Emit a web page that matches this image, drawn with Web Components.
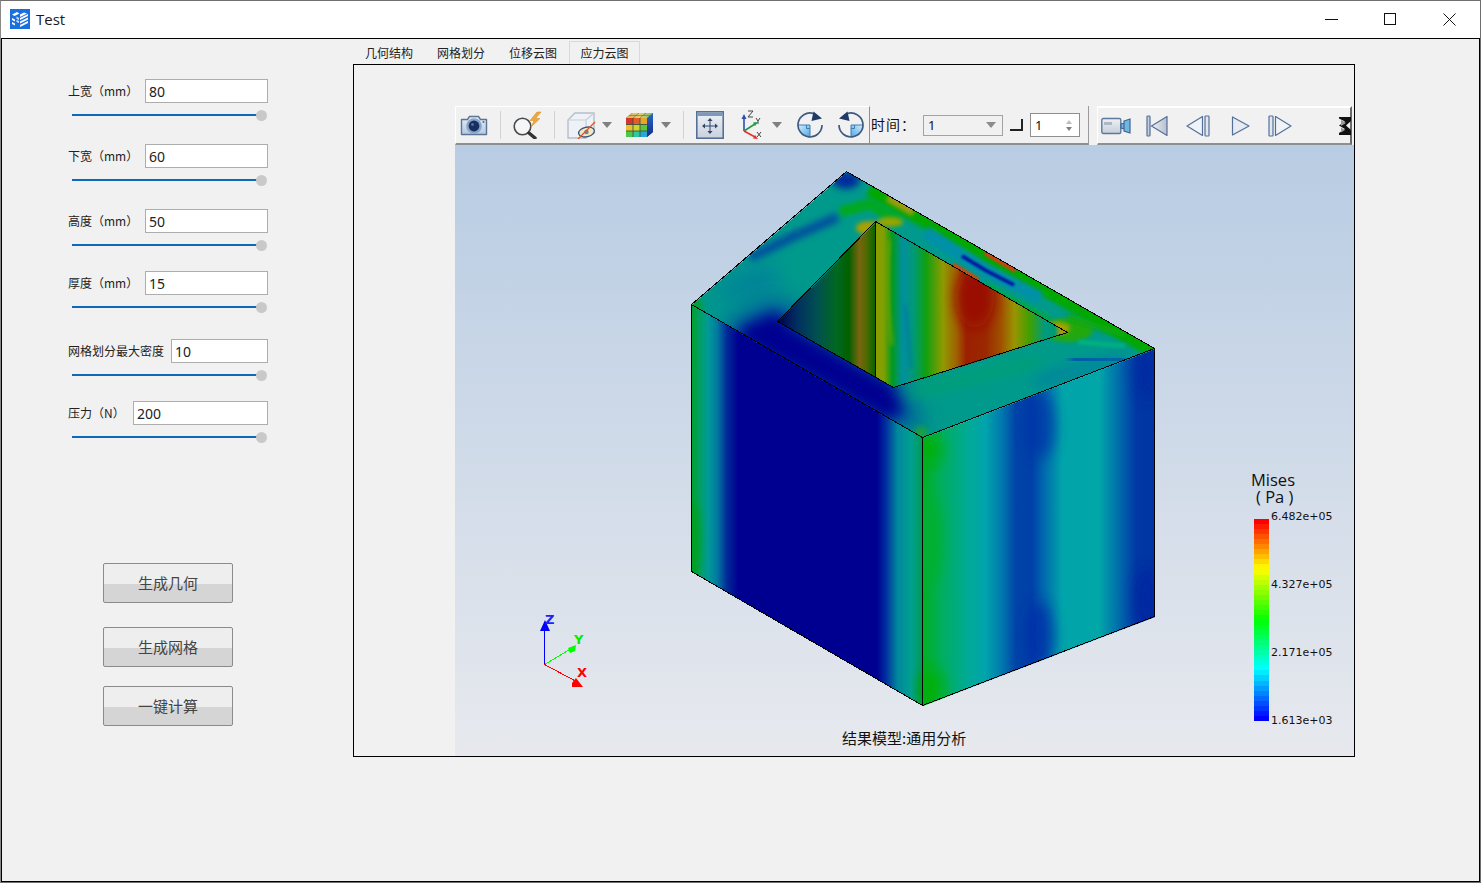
<!DOCTYPE html>
<html lang="zh">
<head>
<meta charset="utf-8">
<title>Test</title>
<style>
	html, body { margin: 0; padding: 0; background: #f1f1f1; overflow: hidden; }
</style>
</head>
<body>
<app-window title-text="Test">
	<side-panel slot="side">
		<param-field label="上宽（mm）" value="80" style="--label-w:77px"></param-field>
		<param-field label="下宽（mm）" value="60" style="--label-w:77px;margin-top:23px"></param-field>
		<param-field label="高度（mm）" value="50" style="--label-w:77px;margin-top:23px"></param-field>
		<param-field label="厚度（mm）" value="15" style="--label-w:77px;margin-top:20px"></param-field>
		<param-field label="网格划分最大密度" value="10" style="--label-w:103px;margin-top:26px"></param-field>
		<param-field label="压力（N）" value="200" style="--label-w:65px;margin-top:20px"></param-field>
		<action-button style="margin-top:120px">生成几何</action-button>
		<action-button style="margin-top:24px">生成网格</action-button>
		<action-button style="margin-top:19px">一键计算</action-button>
	</side-panel>
	<tab-view slot="main">
		<tab-item slot="tabs">几何结构</tab-item>
		<tab-item slot="tabs">网格划分</tab-item>
		<tab-item slot="tabs">位移云图</tab-item>
		<tab-item slot="tabs" active>应力云图</tab-item>
		<fem-toolbar></fem-toolbar>
		<fem-viewport>
			<color-legend></color-legend>
			<span slot="caption">结果模型:通用分析</span>
		</fem-viewport>
	</tab-view>
</app-window>

<script>
const CJK = '"Noto Sans CJK SC", "Noto Sans", sans-serif';

// Outer window: title bar, then side panel and tab area
class AppWindow extends HTMLElement {
	constructor () {
		super();
		this.attachShadow( { mode: 'open' } );
		this.shadowRoot.innerHTML = `
			<style>
				:host { display: flex; flex-direction: column; width: 1481px; height: 883px; box-sizing: border-box; border: 1px solid #6f6f6f; border-left-color: #8a8a8a; background: #fff; }
				header { flex: none; height: 37px; display: flex; align-items: center; background: #fff; padding-right: 1px; }
				.logo { width: 20px; height: 20px; margin: -1px 6px 0 9px; }
				.name { font: 15px "Open Sans", sans-serif; color: #1a1a1a; flex: 1; margin-top: -2px; }
				.ctl { width: 59px; height: 37px; display: flex; align-items: center; justify-content: center; margin-top: -1px; }
				.body { flex: 1; display: flex; min-height: 0; border: 1px solid #000; background: #f1f1f1; }
			</style>
			<header>
				<svg class="logo" viewBox="0 0 20 20">
					<rect width="20" height="20" fill="#1a6fe0"/>
					<path d="M2 5.5 7 3 9.5 4.5 4.5 7zM2 9l3 1.5v2L2 11zM2 13l3 1.5v2L2 15z" fill="#fff"/>
					<path d="M6.5 11l2.5 1v2l-2.500-1zM6.5 7.5 9 9v2L6.5 9.7z" fill="#cfe2fb"/>
					<path d="M10 9 18 5v2l-8 4zM10 12.5l8-4v2l-8 4zM10 16l8-4v2l-8 4zM10 5.5 14 3.5l3 1-7 3.5z" fill="#fff"/>
				</svg>
				<span class="name">${ this.getAttribute( 'title-text' ) }</span>
				<span class="ctl"><svg width="13" height="13"><path d="M0 6.5h13" stroke="#111" fill="none"/></svg></span>
				<span class="ctl"><svg width="13" height="13"><rect x=".5" y=".5" width="11" height="11" stroke="#111" fill="none"/></svg></span>
				<span class="ctl"><svg width="13" height="13"><path d="M.5.5l12 12M12.5.5l-12 12" stroke="#111" fill="none"/></svg></span>
			</header>
			<div class="body"><slot name="side"></slot><slot name="main"></slot></div>
		`;
	}
}
customElements.define( 'app-window', AppWindow );

class SidePanel extends HTMLElement {
	constructor () {
		super();
		this.attachShadow( { mode: 'open' } );
		this.shadowRoot.innerHTML = `
			<style>
				:host { display: flex; flex-direction: column; flex: none; width: 351px; box-sizing: border-box; padding: 40px 0 0 66px; }
			</style>
			<slot></slot>
		`;
	}
}
customElements.define( 'side-panel', SidePanel );

// Label + line edit + slider
class ParamField extends HTMLElement {
	constructor () {
		super();
		this.attachShadow( { mode: 'open' } );
		this.shadowRoot.innerHTML = `
			<style>
				:host { display: block; width: 200px; }
				.row { display: flex; align-items: center; height: 24px; }
				label { flex: none; width: var(--label-w, 77px); font: 12px/26px ${ CJK }; color: #222; white-space: nowrap; }
				.edit { flex: 1; height: 24px; box-sizing: border-box; border: 1px solid #adadad; background: #fff; padding-left: 3px; font: 14px/24px "Noto Sans", sans-serif; color: #222; }
				.slider { position: relative; height: 11px; margin: 7px 0 0 4px; }
				.track { position: absolute; left: 0; right: 8px; top: 4px; height: 2px; background: #0f68b8; }
				.thumb { position: absolute; right: 1px; top: 0; width: 11px; height: 11px; border-radius: 50%; background: #c9c9c9; }
			</style>
			<div class="row">
				<label>${ this.getAttribute( 'label' ) }</label>
				<div class="edit">${ this.getAttribute( 'value' ) }</div>
			</div>
			<div class="slider"><div class="track"></div><div class="thumb"></div></div>
		`;
	}
}
customElements.define( 'param-field', ParamField );

class ActionButton extends HTMLElement {
	constructor () {
		super();
		this.attachShadow( { mode: 'open' } );
		this.shadowRoot.innerHTML = `
			<style>
				:host { display: flex; align-items: center; justify-content: center; width: 130px; height: 40px; box-sizing: border-box; padding-bottom: 2px; margin-left: 35px; border: 1px solid #8b8b8b; border-radius: 2px; background: linear-gradient(#eeeeee 52%, #d5d5d5 52%); font: 15px ${ CJK }; color: #444; }
			</style>
			<slot></slot>
		`;
	}
}
customElements.define( 'action-button', ActionButton );

class TabView extends HTMLElement {
	constructor () {
		super();
		this.attachShadow( { mode: 'open' } );
		this.shadowRoot.innerHTML = `
			<style>
				:host { display: flex; flex-direction: column; flex: none; width: 1002px; height: 716px; margin-top: 2px; }
				.bar { flex: none; display: flex; height: 23px; }
				.pane { flex: 1; min-height: 0; display: flex; flex-direction: column; box-sizing: border-box; border: 1px solid #000; padding: 41px 0 0 101px; background: #f1f1f1; }
			</style>
			<div class="bar"><slot name="tabs"></slot></div>
			<div class="pane"><slot></slot></div>
		`;
	}
}
customElements.define( 'tab-view', TabView );

class TabItem extends HTMLElement {
	constructor () {
		super();
		this.attachShadow( { mode: 'open' } );
		this.shadowRoot.innerHTML = `
			<style>
				:host { display: block; box-sizing: border-box; width: 72px; height: 23px; text-align: center; font: 12px/22px ${ CJK }; color: #222; border: 1px solid transparent; border-bottom: 0; }
				:host([active]) { border-color: #d9d9d9; background: #f1f1f1; width: 71px; }
			</style>
			<slot></slot>
		`;
	}
}
customElements.define( 'tab-item', TabItem );

// Toolbar icons, keyed by name. Each is drawn in its own pixel box.
const ROTATE = `
	<defs><linearGradient id="q" x1="0" y1="0" x2="1" y2="1"><stop offset="0" stop-color="#d6ecfa"/><stop offset="1" stop-color="#4fa8e4"/></linearGradient></defs>
	<path d="M1 14H13V26A12 12 0 0 1 1 14z" fill="url(#q)"/>
	<path d="M1 14H13V26M9.5 14v3.5H13" fill="none" stroke="#3a7fb8" stroke-width="1"/>
	<path d="M16.5 2.5A12 12 0 1 0 25 14" fill="none" stroke="#3f5a80" stroke-width="1.7"/>
	<path d="M16.5 .5 25 7.5 14.5 10z" fill="#1f3a66"/>`;

const ICONS = {
	camera: `<svg width="28" height="24" viewBox="0 0 28 24">
		<defs><linearGradient id="cam" x1="0" y1="0" x2="0" y2="1"><stop offset="0" stop-color="#e4edf7"/><stop offset="1" stop-color="#b4cae3"/></linearGradient></defs>
		<path d="M1.5 6.5h6l2-3h9l2 3h6v15h-25z" fill="url(#cam)" stroke="#5a7598" stroke-width="1.4" stroke-linejoin="round"/>
		<circle cx="14" cy="13" r="7.8" fill="#8ba4c8"/><circle cx="14" cy="13" r="5.4" fill="#17305f"/><circle cx="12.5" cy="11.5" r="1.3" fill="#5d7fb0"/>
		<circle cx="23.5" cy="9" r="1" fill="#4e6a8f"/></svg>`,
	zoom: `<svg width="30" height="28" viewBox="0 0 30 28">
		<circle cx="9.5" cy="15.5" r="8.3" fill="#f4f6f8" stroke="#4a4a4a" stroke-width="1.6"/>
		<path d="M16 22 22 27" stroke="#333" stroke-width="3.4" stroke-linecap="round"/>
		<path d="M24 1l-7 8.5h4.2L18 16l9-8.5h-4.4L28 1z" fill="#f0a63a" stroke="#cf8a20" stroke-width=".5"/></svg>`,
	cube: `<svg width="30" height="28" viewBox="0 0 30 28">
		<path d="M1 9 8 2h19v17l-8 8H1z" fill="#eef1f5" stroke="#b4bfcc" stroke-width="1.4"/>
		<path d="M1 9h18v18M19 9l8-7" fill="none" stroke="#c6cfda" stroke-width="1.2"/>
		<ellipse cx="19.5" cy="21" rx="8" ry="4.8" fill="#f4e6bd" stroke="#33527e" stroke-width="1.3" transform="rotate(-12 19.5 21)"/>
		<circle cx="19.5" cy="21" r="2.2" fill="#6b84a8"/>
		<path d="M11 28 28 11" stroke="#d8552a" stroke-width="1.3"/></svg>`,
	rubik: `<svg width="28" height="26" viewBox="0 0 28 26">
		<defs><linearGradient id="rt" x1="0" y1="0" x2="1" y2="0"><stop offset="0" stop-color="#d8b050"/><stop offset=".5" stop-color="#e8d070"/><stop offset="1" stop-color="#70c070"/></linearGradient>
		<linearGradient id="rs" x1="0" y1="0" x2="0" y2="1"><stop offset="0" stop-color="#2a68c8"/><stop offset="1" stop-color="#142c88"/></linearGradient></defs>
		<path d="M0 6 6 1h21v19l-6 5H0z" fill="#2147a8"/>
		<path d="M21 6 27 1v19l-6 5z" fill="url(#rs)"/>
		<path d="M0 6 6 1h21l-6 5z" fill="url(#rt)"/>
		<path d="M7 6 13 1M14 6l6-5M3 3.5h21" stroke="#6a7a40" stroke-width=".7" fill="none"/>
		<rect x="0" y="6" width="7" height="6.5" fill="#d8342a"/><rect x="7" y="6" width="7" height="6.5" fill="#e0602c"/><rect x="14" y="6" width="7" height="6.5" fill="#e8a52c"/>
		<rect x="0" y="12.5" width="7" height="6.5" fill="#e8c030"/><rect x="7" y="12.5" width="7" height="6.5" fill="#c8d830"/><rect x="14" y="12.5" width="7" height="6.5" fill="#5ac83a"/>
		<rect x="0" y="19" width="7" height="6" fill="#4ac84a"/><rect x="7" y="19" width="7" height="6" fill="#30c8a0"/><rect x="14" y="19" width="7" height="6" fill="#28a8d8"/>
		<path d="M7 6v19M14 6v19M0 12.5h21M0 19h21" stroke="#3a4a3a" stroke-width=".8"/></svg>`,
	fit: `<svg width="28" height="28" viewBox="0 0 28 28">
		<defs><linearGradient id="fitbg" x1="0" y1="0" x2="0" y2="1"><stop offset="0" stop-color="#eef1f6"/><stop offset="1" stop-color="#c9d1de"/></linearGradient></defs>
		<rect x=".8" y=".8" width="26.4" height="26.4" fill="url(#fitbg)" stroke="#4e6a8f" stroke-width="1.5"/>
		<rect x="1.5" y="1.5" width="25" height="3.5" fill="#7f97b8"/>
		<path d="M14 8v14M7 15h14" stroke="#2f4668" stroke-width="1"/>
		<path d="M14 7l-2.6 3h5.2zM14 23l-2.6-3h5.2zM6 15l3-2.6v5.2zM22 15l-3-2.6v5.2z" fill="#2f4668"/></svg>`,
	triad: `<svg width="26" height="30" viewBox="0 0 26 30">
		<path d="M4 21V7" stroke="#2c4fb0" stroke-width="1.6"/><path d="M4 4 1.5 9h5z" fill="#2c4fb0"/>
		<path d="M4 21 15 14" stroke="#1e9a45" stroke-width="1.6"/><path d="M18 12l-5 .5 2 3.5z" fill="#1e9a45"/>
		<path d="M4 21l11 6" stroke="#e53030" stroke-width="1.6"/><path d="M18 29l-5-.5 2-3.5z" fill="#e53030"/>
		<path d="M8 1h5l-5 6h5M16 8l2 3 2-3M18 11v3M17 22l4 5M21 22l-4 5" stroke="#444" stroke-width="1" fill="none"/></svg>`,
	rotcw: `<svg width="27" height="28" viewBox="0 0 27 28">${ ROTATE }</svg>`,
	rotccw: `<svg width="27" height="28" viewBox="0 0 27 28"><g transform="translate(26 0) scale(-1 1)">${ ROTATE }</g></svg>`,
	video: `<svg width="30" height="18" viewBox="0 0 30 18">
		<defs><linearGradient id="vid" x1="0" y1="0" x2="0" y2="1"><stop offset="0" stop-color="#eef1f5"/><stop offset="1" stop-color="#c6ced9"/></linearGradient></defs>
		<rect x=".8" y="1.5" width="19" height="15" rx="1.5" fill="url(#vid)" stroke="#5d7a9e" stroke-width="1.4"/>
		<rect x="3" y="5" width="8" height="3" fill="#aeb8c5"/>
		<path d="M20 7l3-1v6l-3-1zM23 4l6-2v14l-6-2z" fill="#6fb7e3" stroke="#44658f" stroke-width="1.2"/></svg>`,
	first: `<svg width="22" height="22" viewBox="0 0 22 22">
		<defs><linearGradient id="pl" x1="0" y1="0" x2="1" y2="0"><stop offset="0" stop-color="#eef1f6"/><stop offset="1" stop-color="#b6c0ce"/></linearGradient></defs>
		<rect x="1" y="1" width="3" height="20" rx=".8" fill="#c6d0dd" stroke="#54709a" stroke-width="1.2"/>
		<path d="M21 1.5v19L5.5 11z" fill="url(#pl)" stroke="#54709a" stroke-width="1.2" stroke-linejoin="round"/></svg>`,
	prev: `<svg width="24" height="22" viewBox="0 0 24 22">
		<path d="M16.5 1.5v19L1 11z" fill="#f0f3f7" stroke="#54709a" stroke-width="1.2" stroke-linejoin="round"/>
		<rect x="19" y="1" width="4" height="20" rx=".8" fill="#e2e7ee" stroke="#54709a" stroke-width="1.2"/></svg>`,
	play: `<svg width="19" height="22" viewBox="0 0 19 22">
		<path d="M1.5 2v18L18 11z" fill="#e6ebf2" stroke="#54709a" stroke-width="1.2" stroke-linejoin="round"/></svg>`,
	next: `<svg width="24" height="22" viewBox="0 0 24 22">
		<rect x="1" y="1" width="4" height="20" rx=".8" fill="#e2e7ee" stroke="#54709a" stroke-width="1.2"/>
		<path d="M7.5 1.5v19L23 11z" fill="#f0f3f7" stroke="#54709a" stroke-width="1.2" stroke-linejoin="round"/></svg>`,
	more: `<svg width="12" height="18" viewBox="0 0 12 18">
		<path d="M0 0h12v4l-5 4.5L12 13v5H0v-2l6-4-6-3.5 6-4-6-3z" fill="#111"/>
		<path d="M2 3l5 3-5 3zM2 10.5l4 2.5-4 2.500z" fill="#9a9a9a"/></svg>`
};

class ToolIcon extends HTMLElement {
	constructor () {
		super();
		this.attachShadow( { mode: 'open' } );
		this.shadowRoot.innerHTML = `
			<style>
				:host { display: flex; flex: none; align-items: center; justify-content: center; }
				svg { display: block; }
			</style>
			${ ICONS[ this.getAttribute( 'name' ) ] || '' }
		`;
	}
}
customElements.define( 'tool-icon', ToolIcon );

class FemToolbar extends HTMLElement {
	constructor () {
		super();
		this.attachShadow( { mode: 'open' } );
		this.shadowRoot.innerHTML = `
			<style>
				:host { display: flex; flex: none; height: 39px; width: 897px; box-sizing: border-box; background: #f1f1f1; }
				.grp { display: flex; align-items: center; box-sizing: border-box; height: 39px; border-bottom: 2px solid #8f8f8f; }
				.g1 { width: 415px; border-top: 1px solid #fff; border-left: 1px solid #fff; border-right: 1px solid #8f8f8f; padding-left: 4px; }
				.g2 { width: 219px; border-right: 1px solid #9a9a9a; padding-top: 1px; }
				.g3 { flex: none; width: 255px; margin-left: 8px; border-top: 2px solid #fff; border-left: 1px solid #fff; border-right: 2px solid #6a6a6a; padding-left: 3px; }
				.sep { flex: none; width: 1px; height: 28px; background: #d2d2d2; }
				.caret { flex: none; width: 0; height: 0; border: 5px solid transparent; border-top: 6px solid #808080; border-bottom: 0; }
				.when { font: 14px ${ CJK }; color: #111; margin: -2px 0 0 1px; width: 52px; letter-spacing: 1px; white-space: nowrap; }
				.combo { width: 80px; height: 21px; box-sizing: border-box; border: 1px solid #a3a3a3; display: flex; align-items: center; justify-content: space-between; padding: 0 6px 0 4px; font: 13px "Noto Sans", sans-serif; color: #111; }
				.corner { flex: none; width: 13px; height: 12px; margin: 0 7px; border-right: 2px solid #222; border-bottom: 2px solid #222; box-sizing: border-box; }
				.spin { width: 50px; height: 24px; box-sizing: border-box; border: 1px solid #8f8f8f; background: #fff; display: flex; align-items: center; justify-content: space-between; padding: 0 7px 0 4px; font: 13px "Noto Sans", sans-serif; color: #111; }
				.arrows { display: flex; flex-direction: column; gap: 3px; }
				.arrows i { display: block; width: 0; height: 0; border: 3px solid transparent; }
				.arrows i:first-child { border-bottom: 4px solid #bdbdbd; border-top: 0; }
				.arrows i:last-child { border-top: 4px solid #808080; border-bottom: 0; }
				.combo .caret { border-top-color: #8c8c8c; }
			</style>
			<div class="grp g1">
				<tool-icon name="camera" style="width:28px"></tool-icon>
				<span class="sep" style="margin-left:12px"></span>
				<tool-icon name="zoom" style="width:30px;margin-left:12px"></tool-icon>
				<span class="sep" style="margin-left:11px"></span>
				<tool-icon name="cube" style="width:30px;margin-left:12px"></tool-icon>
				<span class="caret" style="margin-left:5px"></span>
				<tool-icon name="rubik" style="width:28px;margin-left:14px"></tool-icon>
				<span class="caret" style="margin-left:7px"></span>
				<span class="sep" style="margin-left:12px"></span>
				<tool-icon name="fit" style="width:28px;margin-left:12px"></tool-icon>
				<tool-icon name="triad" style="width:26px;margin-left:16px"></tool-icon>
				<span class="caret" style="margin-left:6px"></span>
				<tool-icon name="rotcw" style="width:27px;margin-left:15px"></tool-icon>
				<tool-icon name="rotccw" style="width:27px;margin-left:14px"></tool-icon>
			</div>
			<div class="grp g2">
				<span class="when">时间：</span>
				<div class="combo"><span>1</span><span class="caret"></span></div>
				<span class="corner"></span>
				<div class="spin"><span>1</span><span class="arrows"><i></i><i></i></span></div>
			</div>
			<div class="grp g3">
				<tool-icon name="video" style="width:30px"></tool-icon>
				<tool-icon name="first" style="width:22px;margin-left:15px"></tool-icon>
				<tool-icon name="prev" style="width:24px;margin-left:18px"></tool-icon>
				<tool-icon name="play" style="width:19px;margin-left:21px"></tool-icon>
				<tool-icon name="next" style="width:24px;margin-left:18px"></tool-icon>
				<tool-icon name="more" style="width:12px;margin-left:47px"></tool-icon>
			</div>
		`;
	}
}
customElements.define( 'fem-toolbar', FemToolbar );

// Stepped colour bar and its values
class ColorLegend extends HTMLElement {
	constructor () {
		super();
		this.attachShadow( { mode: 'open' } );

		// Contour colours, red at the top. 40 bands like the solver's legend.
		const stops = [ [ 0, [ 255, 0, 0 ] ], [ .24, [ 255, 255, 0 ] ], [ .5, [ 0, 255, 0 ] ], [ .75, [ 0, 255, 255 ] ], [ 1, [ 0, 0, 255 ] ] ];
		let bands = '';
		for ( let i = 0; i < 40; i++ ) {
			const t = i / 39;
			let k = 0;
			while ( k < stops.length - 2 && t > stops[ k + 1 ][ 0 ] ) { k++; }
			const f = ( t - stops[ k ][ 0 ] ) / ( stops[ k + 1 ][ 0 ] - stops[ k ][ 0 ] );
			const c = stops[ k ][ 1 ].map( ( v, j ) => Math.round( v + ( stops[ k + 1 ][ 1 ][ j ] - v ) * f ) );
			bands += `<i style="background:rgb(${ c.join( ',' ) })"></i>`;
		}

		this.shadowRoot.innerHTML = `
			<style>
				:host { position: absolute; left: 796px; top: 326px; width: 90px; height: 260px; display: block; color: #111; }
				.name { font: 16.5px/17px "Open Sans", sans-serif; height: 17px; }
				.unit { font: 16.5px/17px "Open Sans", sans-serif; height: 20px; padding-left: 5px; white-space: pre; }
				.scale { display: flex; }
				.bar { width: 15px; height: 202px; margin: 11px 0 0 3px; display: flex; flex-direction: column; }
				.bar i { flex: 1; display: block; }
				.vals { display: flex; flex-direction: column; justify-content: space-between; height: 218px; margin: 2px 0 0 2px; font: 11px/14px "DejaVu Sans", sans-serif; }
			</style>
			<div class="name">Mises</div>
			<div class="unit">( Pa )</div>
			<div class="scale">
				<div class="bar">${ bands }</div>
				<div class="vals"><span>6.482e+05</span><span>4.327e+05</span><span>2.171e+05</span><span>1.613e+03</span></div>
			</div>
		`;
	}
}
customElements.define( 'color-legend', ColorLegend );

// The contour plot. The svg viewBox uses window pixels, so the model is free-canvas content.
class FemViewport extends HTMLElement {
	constructor () {
		super();
		this.attachShadow( { mode: 'open' } );
		this.shadowRoot.innerHTML = `
			<style>
				:host { position: relative; display: block; flex: 1; width: 899px; min-height: 0; background: linear-gradient(#b8cce3, #e7e9ee); overflow: hidden; }
				svg { position: absolute; left: 0; top: 0; }
				.caption { position: absolute; left: 387px; top: 583px; font: 15px/20px ${ CJK }; color: #111; white-space: nowrap; }
			</style>
			<svg width="899" height="611" viewBox="455 145 899 611">
				<defs>
					<linearGradient id="leftFace" gradientUnits="userSpaceOnUse" x1="692" y1="0" x2="923" y2="0">
						<stop offset="0" stop-color="#00a030"/><stop offset=".03" stop-color="#00a060"/><stop offset=".07" stop-color="#009a98"/><stop offset=".11" stop-color="#0078a0"/><stop offset=".15" stop-color="#002c98"/><stop offset=".2" stop-color="#000090"/><stop offset=".8" stop-color="#000090"/><stop offset=".84" stop-color="#0030a0"/><stop offset=".89" stop-color="#00889c"/><stop offset=".95" stop-color="#00a090"/><stop offset="1" stop-color="#009a50"/>
					</linearGradient>
					<linearGradient id="rightFace" gradientUnits="userSpaceOnUse" x1="923" y1="0" x2="1155" y2="0">
						<stop offset="0" stop-color="#00b020"/><stop offset=".08" stop-color="#00ae60"/><stop offset=".2" stop-color="#00aa98"/><stop offset=".27" stop-color="#00a4ac"/><stop offset=".34" stop-color="#0078ae"/><stop offset=".4" stop-color="#0044a8"/><stop offset=".47" stop-color="#0040a8"/><stop offset=".53" stop-color="#0070ae"/><stop offset=".6" stop-color="#00a4aa"/><stop offset=".76" stop-color="#00a6a8"/><stop offset=".85" stop-color="#0068ac"/><stop offset=".92" stop-color="#0038a4"/><stop offset="1" stop-color="#0034a4"/>
					</linearGradient>
					<linearGradient id="wallRight" gradientUnits="userSpaceOnUse" x1="876" y1="0" x2="1068" y2="0">
						<stop offset="0" stop-color="#8c9c00"/><stop offset=".04" stop-color="#80a000"/><stop offset=".085" stop-color="#009a20"/><stop offset=".14" stop-color="#0090a0"/><stop offset=".2" stop-color="#009a70"/><stop offset=".26" stop-color="#10a010"/><stop offset=".35" stop-color="#909a00"/><stop offset=".42" stop-color="#a06000"/><stop offset=".47" stop-color="#9c2000"/><stop offset=".57" stop-color="#9a2800"/><stop offset=".65" stop-color="#a05000"/><stop offset=".72" stop-color="#9a9400"/><stop offset=".8" stop-color="#40a000"/><stop offset=".88" stop-color="#009a80"/><stop offset=".93" stop-color="#009a70"/><stop offset=".96" stop-color="#a09a10"/>
					</linearGradient>
					<linearGradient id="wallLeft" gradientUnits="userSpaceOnUse" x1="778" y1="0" x2="876" y2="0">
						<stop offset="0" stop-color="#000050"/><stop offset=".2" stop-color="#003060"/><stop offset=".4" stop-color="#005050"/><stop offset=".6" stop-color="#006820"/><stop offset=".72" stop-color="#006000"/><stop offset=".83" stop-color="#7a6410"/><stop offset=".9" stop-color="#506a00"/><stop offset="1" stop-color="#006400"/>
					</linearGradient>
					<filter id="b12" x="-80%" y="-80%" width="260%" height="260%"><feGaussianBlur stdDeviation="12"/></filter>
					<filter id="b8" x="-80%" y="-80%" width="260%" height="260%"><feGaussianBlur stdDeviation="7"/></filter>
					<filter id="b4" x="-80%" y="-80%" width="260%" height="260%"><feGaussianBlur stdDeviation="3.5"/></filter>
					<filter id="b2" x="-80%" y="-80%" width="260%" height="260%"><feGaussianBlur stdDeviation="2"/></filter>
					<filter id="b1" x="-80%" y="-80%" width="260%" height="260%"><feGaussianBlur stdDeviation="1.1"/></filter>
					<clipPath id="topClip"><path d="M847 172 1155 349 923 438 692 305z"/></clipPath>
					<clipPath id="rightClip"><path d="M923 438 1155 349V617L923 706z"/></clipPath>
					<clipPath id="leftClip"><path d="M692 305 923 438V706L692 572z"/></clipPath>
					<clipPath id="wallClip"><path d="M876 222 1068 333 894 388 876 377z"/></clipPath>
				</defs>

				<!-- front faces -->
				<path d="M692 305 923 438V706L692 572z" fill="url(#leftFace)"/>
				<g clip-path="url(#leftClip)">
					<ellipse cx="692" cy="540" rx="8" ry="40" fill="#00a020" filter="url(#b4)"/>
					<ellipse cx="923" cy="690" rx="6" ry="20" fill="#00a020" filter="url(#b4)"/>
				</g>
				<path d="M923 438 1155 349V617L923 706z" fill="url(#rightFace)"/>
				<g clip-path="url(#rightClip)">
					<ellipse cx="928" cy="450" rx="14" ry="16" fill="#00b010" filter="url(#b8)"/>
					<ellipse cx="928" cy="690" rx="16" ry="24" fill="#00b010" filter="url(#b8)"/>
					<ellipse cx="930" cy="540" rx="12" ry="45" fill="#00b030" filter="url(#b8)"/>
					<ellipse cx="1040" cy="635" rx="13" ry="34" fill="#0028a8" opacity=".7" filter="url(#b8)"/>
					<ellipse cx="1040" cy="425" rx="15" ry="34" fill="#0030a8" opacity=".7" filter="url(#b8)"/>
					<ellipse cx="1145" cy="370" rx="10" ry="30" fill="#0028a0" opacity=".7" filter="url(#b8)"/>
					<ellipse cx="1146" cy="600" rx="12" ry="34" fill="#0024a0" opacity=".7" filter="url(#b8)"/>
				</g>

				<!-- top face, blurred blotches clipped to the outline -->
				<path d="M847 172 1155 349 923 438 692 305z" fill="#009a8c"/>
				<g clip-path="url(#topClip)">
					<ellipse cx="846" cy="180" rx="14" ry="9" fill="#002c9c" filter="url(#b4)"/>
					<path d="M750 258 790 238 838 217" fill="none" stroke="#0048a0" stroke-width="9" filter="url(#b4)"/>
					<path d="M715 300 780 285 770 265 720 285z" fill="#0078a0" filter="url(#b12)"/>
					<path d="M725 325 770 300 800 310 900 380 925 430 880 425 725 345z" fill="#0050a0" filter="url(#b12)"/>
					<path d="M740 328 775 312 795 330 893 385 903 415 885 420 740 340z" fill="#000090" filter="url(#b8)"/>
					<circle cx="694" cy="306" r="8" fill="#00a020" filter="url(#b4)"/>
					<path d="M870 188 1000 262 1155 350" fill="none" stroke="#00a800" stroke-width="17" filter="url(#b2)"/>
					<path d="M840 212 870 204 900 222" fill="none" stroke="#00a820" stroke-width="11" filter="url(#b2)"/>
					<ellipse cx="869" cy="228" rx="13" ry="7" fill="#a8a000" filter="url(#b2)"/>
					<ellipse cx="890" cy="222" rx="13" ry="5" fill="#98a400" filter="url(#b2)"/>
					<path d="M888 197 914 212" fill="none" stroke="#a09c10" stroke-width="9" filter="url(#b2)"/>
					<path d="M985 252 1016 270" fill="none" stroke="#d04010" stroke-width="6" filter="url(#b1)"/>
					<path d="M925 232 985 270 1040 298" fill="none" stroke="#0090a8" stroke-width="13" filter="url(#b2)"/>
					<path d="M962 256 985 270 1014 285" fill="none" stroke="#0010a0" stroke-width="3.5" filter="url(#b1)"/>
					<path d="M953 265 978 280" fill="none" stroke="#c84810" stroke-width="5" filter="url(#b1)"/>
					<path d="M985 285 1050 320" fill="none" stroke="#00a840" stroke-width="6" filter="url(#b2)"/>
					<ellipse cx="1068" cy="330" rx="25" ry="12" fill="#20a810" filter="url(#b2)"/>
					<ellipse cx="1058" cy="328" rx="12" ry="6" fill="#a8a000" filter="url(#b2)"/>
					<path d="M1068 317 1125 335" fill="none" stroke="#10a810" stroke-width="6" filter="url(#b2)"/>
					<path d="M1078 342 1125 346" fill="none" stroke="#00b080" stroke-width="5" filter="url(#b1)"/>
					<path d="M1070 359 1125 360" fill="none" stroke="#0050a8" stroke-width="12" filter="url(#b4)"/>
					<path d="M1035 382 1125 358" fill="none" stroke="#0078a8" stroke-width="8" filter="url(#b8)"/>
					<path d="M910 393 1040 360" fill="none" stroke="#00a070" stroke-width="10" filter="url(#b8)"/>
					<circle cx="921" cy="433" r="6" fill="#20a820" filter="url(#b4)"/>
				</g>

				<!-- inner walls seen through the opening -->
				<path d="M876 222 778 322 876 377z" fill="url(#wallLeft)"/>
				<path d="M876 222 1068 333 894 388 876 377z" fill="url(#wallRight)"/>
				<g clip-path="url(#wallClip)">
					<ellipse cx="975" cy="298" rx="19" ry="30" fill="#9a0c00" filter="url(#b8)"/>
					<path d="M905 305 Q908 335 911 368" fill="none" stroke="#0070a8" stroke-width="2" filter="url(#b2)"/>
					<path d="M889 240 Q884 290 892 345" fill="none" stroke="#70a000" stroke-width="3" filter="url(#b2)"/>
				</g>

				<!-- outlines -->
				<g fill="none" stroke="#000" stroke-width="1" shape-rendering="crispEdges" transform="translate(-.5 -.5)">
					<path d="M847 172 1155 349V617L923 706 692 572V305z"/>
					<path d="M692 305 923 438 1155 349M923 438V706"/>
					<path d="M876 222 1068 333 894 388 778 322zM876 222V377"/>
				</g>

				<!-- global axes -->
				<g shape-rendering="crispEdges" fill="none" stroke-width="1" transform="translate(-.5 -.5)">
					<path d="M545 665V628" stroke="#0000ff"/>
					<path d="M545 665 572 649" stroke="#00ff00"/>
					<path d="M545 665 575 681" stroke="#ff0000"/>
				</g>
				<path d="M545 620l-5 11h10z" fill="#0000ff"/>
				<path d="M576 645l-8 3 2 5 5-2z" fill="#00ff00"/>
				<path d="M583 687h-11v-4l4-5z" fill="#ff0000"/>
				<g font-family="DejaVu Sans, sans-serif" font-size="13" font-weight="700">
					<text x="545" y="624" fill="#2020ff">Z</text>
					<text x="574" y="644" fill="#00ee00">Y</text>
					<text x="577" y="677" fill="#ff0000">X</text>
				</g>
			</svg>
			<slot></slot>
			<div class="caption"><slot name="caption"></slot></div>
		`;
	}
}
customElements.define( 'fem-viewport', FemViewport );
</script>
</body>
</html>
